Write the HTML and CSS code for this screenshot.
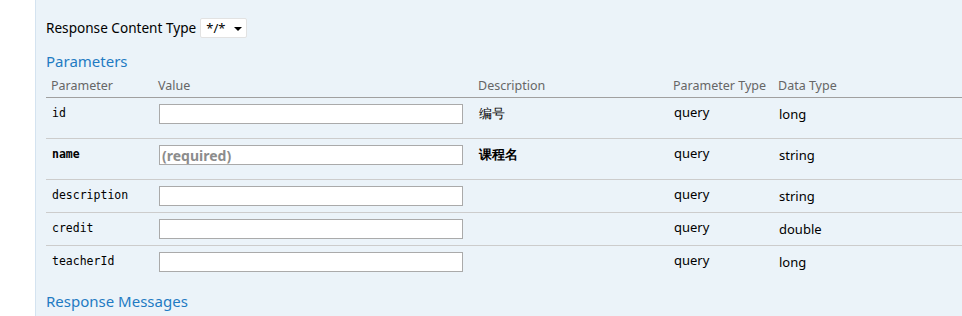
FILE: index.html
```html
<!DOCTYPE html>
<html>
<head>
<meta charset="utf-8">
<title>Parameters</title>
<link rel="stylesheet" href="styles.css">
</head>
<body>
<div class="wrap">
  <div class="content">
    <div class="response-type">
      <label>Response Content Type</label>
      <span class="select">*/*<i class="caret"></i></span>
    </div>
    <h4>Parameters</h4>
    <table class="params">
      <thead>
        <tr>
          <th class="c-name">Parameter</th>
          <th class="c-value">Value</th>
          <th class="c-desc">Description</th>
          <th class="c-ptype">Parameter Type</th>
          <th class="c-dtype">Data Type</th>
        </tr>
      </thead>
      <tbody>
        <tr>
          <td class="code">id</td>
          <td><input type="text" class="field"></td>
          <td class="desc"><p>编号</p></td>
          <td>query</td>
          <td class="dtype">long</td>
        </tr>
        <tr>
          <td class="code required">name</td>
          <td><input type="text" class="field required" placeholder="(required)"></td>
          <td class="desc"><p><strong>课程名</strong></p></td>
          <td>query</td>
          <td class="dtype">string</td>
        </tr>
        <tr>
          <td class="code">description</td>
          <td><input type="text" class="field"></td>
          <td class="desc"></td>
          <td>query</td>
          <td class="dtype">string</td>
        </tr>
        <tr>
          <td class="code">credit</td>
          <td><input type="text" class="field"></td>
          <td class="desc"></td>
          <td>query</td>
          <td class="dtype">double</td>
        </tr>
        <tr>
          <td class="code">teacherId</td>
          <td><input type="text" class="field"></td>
          <td class="desc"></td>
          <td>query</td>
          <td class="dtype">long</td>
        </tr>
      </tbody>
    </table>
    <h4 class="messages">Response Messages</h4>
  </div>
</div>
</body>
</html>
```

FILE: styles.css
```css
*{margin:0; padding:0; box-sizing:border-box;}
html,body{background:#fff; overflow:hidden;}
body{font-family:"Noto Sans","Open Sans",sans-serif; color:#000; font-size:13px;}
.wrap{padding-left:35px; height:316px;}
.content{height:100%; background:#ebf3f9; border-left:1px solid #d4e3f0; padding:17px 0 0 10px;}

.response-type{display:flex; align-items:center; height:21px;}
.response-type label{font-size:13.6px; margin-right:4px;}
.select{display:inline-flex; align-items:center; width:47px; height:20px; background:#fff; border:1px solid #e2e2e2; border-radius:2px; padding-left:5px; font-size:13px;}
.caret{width:0; height:0; border-left:4px solid transparent; border-right:4px solid transparent; border-top:4px solid #000; margin-left:9px; margin-top:2px;}

h4{font-weight:normal; font-size:15px; color:#1f7bc3; margin-top:12px; line-height:22px;}
h4.messages{margin-top:12px;}

.params{border-collapse:collapse; width:100%; table-layout:fixed;}
.params th{text-align:left; font-weight:normal; font-size:12.5px; color:#666; padding:5px 5px 3px; line-height:17px; border-bottom:1px solid #a0a0a0;}
.c-name{width:107px;}
.c-value{width:320px;}
.c-desc{width:195px;}
.c-ptype{width:105px;}
.params td{vertical-align:top; padding:6px; line-height:17px; border-bottom:1px solid #cccccc;}
.params tbody tr:last-child td{border-bottom:none;}
.params td.code{font-family:"DejaVu Sans Mono","Liberation Mono",monospace; font-size:11.5px; padding-top:7px;}
.params td.required{font-weight:bold;}
.params td.desc p{margin:1px 0 10px;}
.params td.dtype{padding-top:8px;}

.field{display:block; width:304px; height:20px; border:1px solid #aaa; background:#fff; padding:0 2px; font-family:inherit; font-size:14px; outline:none;}
.field.required::placeholder{color:#8c8c8c; font-weight:bold;}
```
